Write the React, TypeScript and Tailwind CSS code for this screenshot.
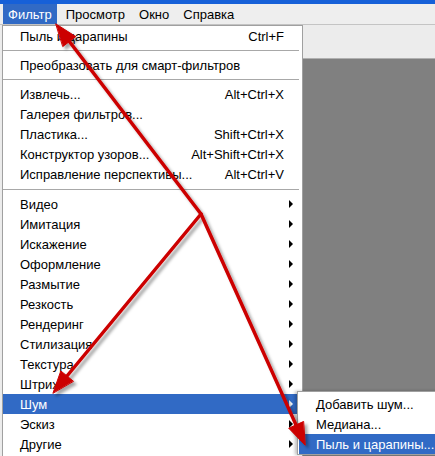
type MenuItem = {
  label: string;
  shortcut?: string;
  submenu?: boolean;
  active?: boolean;
};

const font = { fontFamily: "'Liberation Sans', Arial, sans-serif" };

const topBar = ["Фильтр", "Просмотр", "Окно", "Справка"];

const groupOne: MenuItem[] = [{ label: "Пыль и царапины", shortcut: "Ctrl+F" }];
const groupTwo: MenuItem[] = [{ label: "Преобразовать для смарт-фильтров" }];
const groupThree: MenuItem[] = [
  { label: "Извлечь...", shortcut: "Alt+Ctrl+X" },
  { label: "Галерея фильтров..." },
  { label: "Пластика...", shortcut: "Shift+Ctrl+X" },
  { label: "Конструктор узоров...", shortcut: "Alt+Shift+Ctrl+X" },
  { label: "Исправление перспективы...", shortcut: "Alt+Ctrl+V" },
];
const groupFour: MenuItem[] = [
  { label: "Видео", submenu: true },
  { label: "Имитация", submenu: true },
  { label: "Искажение", submenu: true },
  { label: "Оформление", submenu: true },
  { label: "Размытие", submenu: true },
  { label: "Резкость", submenu: true },
  { label: "Рендеринг", submenu: true },
  { label: "Стилизация", submenu: true },
  { label: "Текстура", submenu: true },
  { label: "Штрих", submenu: true },
  { label: "Шум", submenu: true, active: true },
  { label: "Эскиз", submenu: true },
  { label: "Другие", submenu: true },
];

const noiseItems = [
  { label: "Добавить шум..." },
  { label: "Медиана..." },
  { label: "Пыль и царапины...", active: true },
];

function Row({ item }: { item: MenuItem }) {
  return (
    <div
      className={`flex h-[20px] items-center pl-[17px] pr-[8px] pt-[2px] ${
        item.active ? "bg-[#316ac5] text-white" : "text-black"
      }`}
    >
      <span className="flex-1 whitespace-nowrap">{item.label}</span>
      {item.shortcut && <span className="mr-[10px] whitespace-nowrap">{item.shortcut}</span>}
      {item.submenu && (
        <span
          className={`mb-[3px] mr-[1px] h-0 w-0 border-y-[4px] border-l-[4px] border-y-transparent ${
            item.active ? "border-l-white" : "border-l-black"
          }`}
        />
      )}
    </div>
  );
}

function Separator({ height }: { height: string }) {
  return (
    <div className={`flex ${height} items-center`}>
      <div className="h-[1px] w-[296px] bg-[#a8a8a8]" />
    </div>
  );
}

function Arrows() {
  return (
    <svg className="pointer-events-none absolute left-0 top-0" width="435" height="456">
      <defs>
        <filter id="sh" x="-20%" y="-20%" width="140%" height="140%">
          <feDropShadow dx="3" dy="3" stdDeviation="1.6" floodColor="#000" floodOpacity="0.35" />
        </filter>
      </defs>
      <g filter="url(#sh)" fill="#cc0000" stroke="#cc0000" strokeLinecap="round">
        <line x1="201" y1="214" x2="69.4" y2="41.5" strokeWidth="3.5" />
        <line x1="201" y1="214" x2="67" y2="376" strokeWidth="3.5" />
        <line x1="201" y1="214" x2="296" y2="424.9" strokeWidth="3.5" />
        <polygon points="56,24 75.8,36.6 63,46.4" strokeWidth="1" strokeLinejoin="round" />
        <polygon points="53,393 60.8,370.9 73.2,381.1" strokeWidth="1" strokeLinejoin="round" />
        <polygon points="305,445 288.7,428.2 303.3,421.6" strokeWidth="1" strokeLinejoin="round" />
      </g>
    </svg>
  );
}

export default function App() {
  return (
    <div className="relative h-[456px] w-[435px] overflow-hidden bg-[#ececec] text-[13px]" style={font}>
      <div className="h-[4px] bg-[#1660d8]" />
      <div className="flex h-[21px] items-center border-b border-[#c4c4c4] bg-[#eeeeee]">
        {topBar.map((name, i) => (
          <span
            key={name}
            className={`flex h-[20px] items-center px-[5px] pt-[1px] ${
              i === 0 ? "ml-[3px] bg-[#316ac5] text-white" : "ml-[4px] text-black"
            }`}
          >
            {name}
          </span>
        ))}
      </div>

      <div className="flex h-[431px]">
        <div className="ml-[2px] w-[301px] shrink-0 border border-b-0 border-[#a0a0a0] bg-white shadow-[3px_3px_3px_rgba(0,0,0,0.35)]">
          {groupOne.map((item) => (
            <Row key={item.label} item={item} />
          ))}
          <Separator height="h-[9px]" />
          {groupTwo.map((item) => (
            <Row key={item.label} item={item} />
          ))}
          <Separator height="h-[9px]" />
          {groupThree.map((item) => (
            <Row key={item.label} item={item} />
          ))}
          <Separator height="h-[10px]" />
          {groupFour.map((item) => (
            <Row key={item.label} item={item} />
          ))}
        </div>

        <div className="flex flex-1 flex-col">
          <div className="h-[34px] border-b border-[#b0b0b0] bg-[#ececec]" />
          <div className="flex-1 bg-[#808080]" />
        </div>
      </div>

      <div className="absolute left-[297px] top-[391px] w-[150px] border border-[#a0a0a0] bg-white pl-[1px] pt-[2px] shadow-[-2px_0_3px_rgba(0,0,0,0.25)]">
        {noiseItems.map((item) => (
          <div
            key={item.label}
            className={`flex h-[20px] items-center whitespace-nowrap pl-[17px] pt-[2px] ${
              item.active ? "bg-[#316ac5] text-white" : "text-black"
            }`}
          >
            {item.label}
          </div>
        ))}
      </div>

      <Arrows />
    </div>
  );
}
